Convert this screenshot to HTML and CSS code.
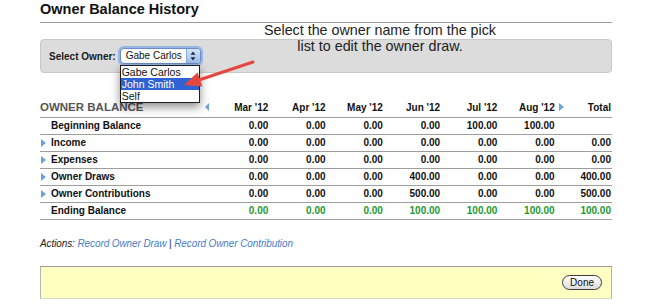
FILE: index.html
```html
<!DOCTYPE html>
<html lang="en">

<head>
    <meta charset="UTF-8">
    <meta name="viewport" content="width=device-width, initial-scale=1.0">
    <title>Owner Balance History</title>
    <link rel="stylesheet" href="styles.css">
</head>

<body>
    <div class="page">
        <h1 class="page-title">Owner Balance History</h1>

        <div class="owner-bar">
            <span class="owner-label">Select Owner:</span>
            <div class="owner-select">
                <div class="select-box">
                    <span class="select-value">Gabe Carlos</span>
                    <span class="select-arrows">
                        <svg width="6" height="10" viewBox="0 0 6 10">
                            <path d="M3 0.5 L5.5 3.8 L0.5 3.8 Z" fill="#1d2b45"/>
                            <path d="M3 9.5 L5.5 6.2 L0.5 6.2 Z" fill="#1d2b45"/>
                        </svg>
                    </span>
                </div>
                <ul class="select-list">
                    <li>Gabe Carlos</li>
                    <li class="selected">John Smith</li>
                    <li>Self</li>
                </ul>
            </div>
        </div>

        <table class="balance">
            <colgroup>
                <col class="col-label">
                <col><col><col><col><col><col><col>
            </colgroup>
            <thead>
                <tr>
                    <th class="head-label">OWNER BALANCE<span class="nav-prev"></span></th>
                    <th>Mar '12</th>
                    <th>Apr '12</th>
                    <th>May '12</th>
                    <th>Jun '12</th>
                    <th>Jul '12</th>
                    <th class="last-month">Aug '12<span class="nav-next"></span></th>
                    <th class="total">Total</th>
                </tr>
            </thead>
            <tbody id="balance-rows"></tbody>
        </table>

        <p class="actions">
            Actions: <a href="#">Record Owner Draw</a> <span class="sep">|</span> <a href="#">Record Owner Contribution</a>
        </p>

        <div class="done-bar">
            <button class="done-btn">Done</button>
        </div>

        <p class="callout">Select the owner name from the pick<br>list to edit the owner draw.</p>

        <svg class="callout-arrow" width="85" height="40" viewBox="0 0 85 40">
            <line x1="78" y1="7" x2="24" y2="25" stroke="#e4473d" stroke-width="3" stroke-linecap="round"/>
            <polygon points="9,30 27.5,31.5 22.5,17.5" fill="#e4473d"/>
        </svg>
    </div>

    <script>
        let rows = [
            { name: 'Beginning Balance', caret: false, values: ['0.00', '0.00', '0.00', '0.00', '100.00', '100.00', ''] },
            { name: 'Income', caret: true, values: ['0.00', '0.00', '0.00', '0.00', '0.00', '0.00', '0.00'] },
            { name: 'Expenses', caret: true, values: ['0.00', '0.00', '0.00', '0.00', '0.00', '0.00', '0.00'] },
            { name: 'Owner Draws', caret: true, values: ['0.00', '0.00', '0.00', '400.00', '0.00', '0.00', '400.00'] },
            { name: 'Owner Contributions', caret: true, values: ['0.00', '0.00', '0.00', '500.00', '0.00', '0.00', '500.00'] },
            { name: 'Ending Balance', caret: false, ending: true, values: ['0.00', '0.00', '0.00', '100.00', '100.00', '100.00', '100.00'] }
        ];

        let body = document.querySelector("#balance-rows");

        for (let row of rows) {
            let tr = document.createElement("TR");
            if (row.ending) {
                tr.classList.add("ending");
            }
            let cells = `<td class="row-label">${row.caret ? '<span class="caret"></span>' : ''}${row.name}</td>`;
            for (let value of row.values) {
                cells += `<td>${value}</td>`;
            }
            tr.innerHTML = cells;
            body.appendChild(tr);
        }
    </script>
</body>

</html>
```

FILE: styles.css
```css
body {
    font-family: "Liberation Sans", Arial, sans-serif;
    background-color: #fff;
    color: #111;
    margin: 0;
    padding: 0;
}

.page {
    position: relative;
    width: 572px;
    margin: 0 40px;
}

.page-title {
    margin: 0;
    padding: 0 0 3px;
    font-size: 14.5px;
    line-height: 19px;
    font-weight: bold;
    border-bottom: 1px solid #9a9a9a;
}

/* owner picker */

.owner-bar {
    display: flex;
    align-items: center;
    gap: 4px;
    margin-top: 16px;
    padding: 8px;
    background-color: #dcdcdc;
    border: 1px solid #c8c8c8;
    border-radius: 4px;
}

.owner-label {
    font-size: 10px;
    font-weight: bold;
    color: #1a1a1a;
}

.owner-select {
    position: relative;
}

.select-box {
    display: flex;
    align-items: center;
    width: 79px;
    height: 14px;
    background-color: #fff;
    border: 1px solid #6b8cc6;
    border-radius: 4px;
    box-shadow: 0 0 0 2px rgba(110, 160, 235, 0.65);
    overflow: hidden;
}

.select-value {
    flex: 1;
    padding-left: 5px;
    font-size: 10px;
    line-height: 14px;
    color: #111;
    white-space: nowrap;
}

.select-arrows {
    display: flex;
    align-items: center;
    justify-content: center;
    width: 13px;
    height: 14px;
    border-left: 1px solid #8fa9d6;
    background: linear-gradient(#d4e3f8, #9ebde9);
}

.select-list {
    position: absolute;
    top: 17px;
    left: 0;
    width: 78px;
    margin: 0;
    padding: 0;
    list-style: none;
    background-color: #fff;
    border: 1px solid #1e1e1e;
    box-shadow: 0 4px 9px rgba(0, 0, 0, 0.45);
    z-index: 2;
}

.select-list li {
    padding-left: 1px;
    font-size: 10.5px;
    line-height: 12px;
    color: #111;
}

.select-list li.selected {
    background-color: #2f62d3;
    color: #fff;
}

/* balance table */

.balance {
    width: 572px;
    margin-top: 28px;
    table-layout: fixed;
    border-collapse: separate;
    border-spacing: 0;
    font-size: 10px;
    font-weight: bold;
}

.balance .col-label {
    width: 171px;
}

.balance th,
.balance td {
    padding: 0;
    text-align: right;
    white-space: nowrap;
    border-bottom: 1px solid #9e9e9e;
}

.balance th {
    position: relative;
    height: 13px;
    padding-bottom: 3px;
    line-height: 13px;
    vertical-align: bottom;
}

.balance th.head-label {
    text-align: left;
    font-size: 11.5px;
    color: #555;
}

.balance th.total,
.balance td:last-child {
    padding-right: 1px;
}

.nav-prev,
.nav-next {
    position: absolute;
    bottom: 6px;
    width: 0;
    height: 0;
    border-top: 4px solid transparent;
    border-bottom: 4px solid transparent;
}

.nav-prev {
    right: 2px;
    border-right: 4px solid #6aa2dc;
}

.nav-next {
    right: -9px;
    border-left: 5px solid #6aa2dc;
}

.balance td {
    height: 16px;
    line-height: 16px;
}

.balance td.row-label {
    padding-left: 11px;
    text-align: left;
}

.caret {
    display: inline-block;
    width: 0;
    height: 0;
    margin-left: -10px;
    margin-right: 5px;
    border-left: 5px solid #6aa2dc;
    border-top: 4px solid transparent;
    border-bottom: 4px solid transparent;
    vertical-align: -1px;
}

.balance tr.ending td {
    color: #22992e;
}

.balance tr.ending td.row-label {
    color: #111;
}

/* actions + footer */

.actions {
    margin: 17px 0 0;
    font-size: 10px;
    line-height: 14px;
    font-style: italic;
    color: #222;
    letter-spacing: -0.1px;
}

.actions a {
    color: #4a7cc6;
    text-decoration: none;
}

.actions .sep {
    font-style: normal;
    color: #1c2a5c;
}

.done-bar {
    display: flex;
    justify-content: flex-end;
    align-items: center;
    height: 31px;
    margin-top: 15px;
    padding-right: 9px;
    background-color: #ffffc2;
    border: 1px solid #b4b4b4;
    border-top-color: #9a9a9a;
    border-bottom-color: #d8d8c0;
}

.done-btn {
    height: 15px;
    padding: 0 7px;
    font-family: "Liberation Sans", Arial, sans-serif;
    font-size: 10px;
    line-height: 13px;
    color: #111;
    background: linear-gradient(#ffffff, #dcdcdc);
    border: 1px solid #3c3c3c;
    border-radius: 8px;
}

/* annotation overlay */

.callout {
    position: absolute;
    top: 22px;
    left: 220px;
    width: 240px;
    margin: 0;
    font-size: 14.3px;
    line-height: 16.4px;
    text-align: center;
    color: #222;
}

.callout-arrow {
    position: absolute;
    top: 55px;
    left: 135px;
    z-index: 3;
}
```
